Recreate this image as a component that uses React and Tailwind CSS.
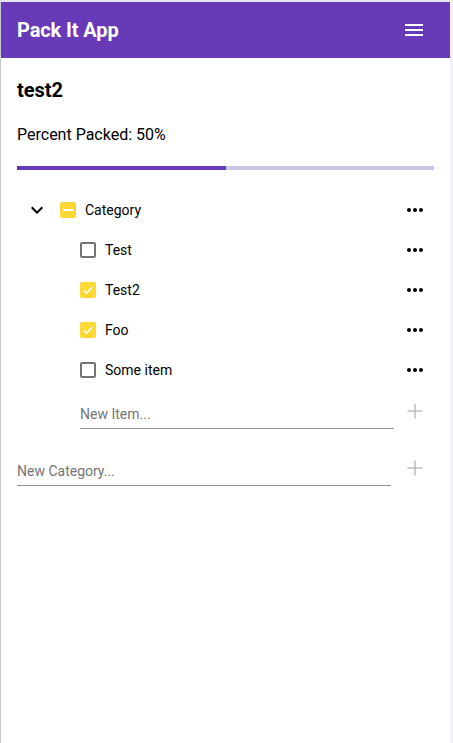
import { useState } from "react";

const items = [
  { id: 1, name: "Test", packed: false },
  { id: 2, name: "Test2", packed: true },
  { id: 3, name: "Foo", packed: true },
  { id: 4, name: "Some item", packed: false },
];

// Material style icons
const MenuIcon = () => (
  <svg width="24" height="24" viewBox="0 0 24 24" fill="currentColor">
    <path d="M3 18h18v-2H3v2zm0-5h18v-2H3v2zm0-7v2h18V6H3z" />
  </svg>
);

const ChevronDown = () => (
  <svg width="24" height="24" viewBox="0 0 24 24" fill="currentColor">
    <path d="M16.59 8.59L12 13.17 7.41 8.59 6 10l6 6 6-6z" />
  </svg>
);

const MoreHoriz = () => (
  <svg width="24" height="24" viewBox="0 0 24 24" fill="currentColor">
    <circle cx="6" cy="12" r="2" />
    <circle cx="12" cy="12" r="2" />
    <circle cx="18" cy="12" r="2" />
  </svg>
);

const Plus = () => (
  <svg width="24" height="24" viewBox="0 0 24 24" fill="none" stroke="#bdbdbd" strokeWidth="1.5">
    <path d="M12 4.5v15M4.5 12h15" />
  </svg>
);

const Checkbox = ({ checked, indeterminate }) => {
  if (indeterminate) {
    return (
      <span className="w-4 h-4 shrink-0 rounded-[2px] bg-[#fdd835] flex items-center justify-center">
        <span className="w-[10px] h-[2px] bg-white" />
      </span>
    );
  }
  if (checked) {
    return (
      <span className="w-4 h-4 shrink-0 rounded-[2px] bg-[#fdd835] flex items-center justify-center">
        <svg width="14" height="14" viewBox="0 0 14 14" fill="none" stroke="white" strokeWidth="1.6">
          <path d="M2.5 7.2l3 3L11.5 4" />
        </svg>
      </span>
    );
  }
  return <span className="block w-4 h-4 shrink-0 rounded-[2px] border-2 border-[#757575] box-border" />;
};

const App = () => {
  const [list] = useState(items);

  return (
    <div
      className="min-h-screen box-border bg-white border-l border-l-[#c9c9d1] border-t-2 border-t-[#e6e6ee] border-r-[3px] border-r-[#f1f1f6] text-black"
      style={{ fontFamily: "Roboto, 'Liberation Sans', sans-serif" }}
    >
      {/* Header */}
      <header className="h-14 bg-[#673ab7] flex items-center justify-between pl-4 pr-6 text-white">
        <h1 className="text-[20px] font-bold tracking-[-0.1px]">Pack It App</h1>
        <MenuIcon />
      </header>

      <div className="px-4 pt-[18px]">
        <h2 className="text-[20px] leading-7 font-bold">test2</h2>
        <p className="text-base leading-6 mt-[19px]">Percent Packed: 50%</p>

        {/* Progress */}
        <div className="mt-[19px] h-1 w-[417px] bg-[#d1c4e9] flex">
          <div className="h-1 w-1/2 bg-[#673ab7]" />
        </div>

        {/* Category tree */}
        <div className="mt-5">
          <div className="h-10 flex items-center">
            <span className="ml-2 w-6 flex justify-center"><ChevronDown /></span>
            <span className="ml-[11px]"><Checkbox indeterminate /></span>
            <span className="ml-[9px] text-sm flex-1">Category</span>
            <span className="mr-[7px]"><MoreHoriz /></span>
          </div>

          {list.map((item) => (
            <div key={item.id} className="h-10 flex items-center">
              <span className="ml-[63px]"><Checkbox checked={item.packed} /></span>
              <span className="ml-[9px] text-sm flex-1">{item.name}</span>
              <span className="mr-[7px]"><MoreHoriz /></span>
            </div>
          ))}

          <div className="flex items-start mt-[5px]">
            <div className="ml-[63px] w-[314px] h-[34px] pt-1 border-b border-[#949494] flex items-center">
              <span className="text-sm text-[#757575]">New Item...</span>
            </div>
            <span className="ml-[9px] mt-[4px]"><Plus /></span>
          </div>
        </div>

        <div className="flex items-start mt-[23px]">
          <div className="w-[374px] h-[34px] pt-1 border-b border-[#949494] flex items-center">
            <span className="text-sm text-[#757575]">New Category...</span>
          </div>
          <span className="ml-[12px] mt-[4px]"><Plus /></span>
        </div>
      </div>
    </div>
  );
};

export default App;
